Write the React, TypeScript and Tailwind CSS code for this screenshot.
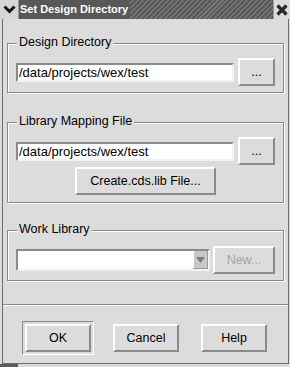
import type { ReactNode } from 'react'

// Motif-style "Set Design Directory" dialog

const raised =
  'border-2 border-t-white border-l-white border-r-[#8a8a8a] border-b-[#8a8a8a] bg-[#dcdcdc]'
const sunken =
  'border-2 border-t-[#8a8a8a] border-l-[#8a8a8a] border-r-[#f2f2f2] border-b-[#f2f2f2]'

function Frame({ label, children, className }: { label: string; children: ReactNode; className: string }) {
  return (
    <div
      className={`relative ml-[4px] w-[277px] border border-[#8a8a8a] shadow-[inset_1px_1px_0_#fff,1px_1px_0_#fff] ${className}`}
    >
      <span className="absolute left-[9px] -top-[10px] bg-[#dcdcdc] px-[2px] text-[12.5px] leading-[16px] text-black">
        {label}
      </span>
      {children}
    </div>
  )
}

function Btn({ children, w, disabled }: { children: ReactNode; w: string; disabled?: boolean }) {
  return (
    <div
      className={`${raised} ${w} h-[28px] shrink-0 flex items-center justify-center text-[12.5px] ${
        disabled ? 'text-[#a4a4a4]' : 'text-black'
      }`}
    >
      {children}
    </div>
  )
}

function PathInput({ value }: { value: string }) {
  return (
    <div className={`${sunken} w-[218px] h-[19px] bg-white flex items-center pl-[1px] text-[13px] leading-none text-black`}>
      {value}
    </div>
  )
}

export default function App() {
  return (
    <div className="w-[290px] h-[367px] bg-[#dcdcdc] overflow-hidden font-['Liberation_Sans',Arial,sans-serif] select-none">
      {/* Title bar */}
      <div className="flex h-[19px]">
        <div className="w-[19px] bg-[#d6d6d6] flex items-center justify-center border-r border-[#9a9a9a]">
          <svg width="13" height="9" viewBox="0 0 13 9">
            <polyline points="1.5,1.5 6.5,6.5 11.5,1.5" fill="none" stroke="#111" strokeWidth="3" />
          </svg>
        </div>
        <div className="flex-1 flex bg-[#585858] items-center">
          <span className="pl-[1px] pr-[2px] text-[11px] font-bold text-white whitespace-nowrap">Set Design Directory</span>
          <div className="flex-1 h-full bg-[repeating-linear-gradient(135deg,#585858_0px,#585858_2px,#767676_2px,#767676_3.5px)]" />
        </div>
        <div className="w-[17px] bg-[#dcdcdc] flex items-center justify-center border-l border-[#9a9a9a]">
          <svg width="12" height="12" viewBox="0 0 12 12">
            <path d="M1.5 1.5 L10.5 10.5 M10.5 1.5 L1.5 10.5" stroke="#2a2a2a" strokeWidth="3.2" />
          </svg>
        </div>
      </div>

      {/* Body */}
      <div className="ml-[2px] w-[287px] h-[345px] border-l border-r border-b border-[#6e6e6e] flex flex-col">
        <Frame label="Design Directory" className="mt-[24px] h-[50px]">
          <div className="flex items-center gap-[4px] pl-[8px] pt-[14px]">
            <PathInput value="/data/projects/wex/test" />
            <Btn w="w-[37px]">...</Btn>
          </div>
        </Frame>

        <Frame label="Library Mapping File" className="mt-[29px] h-[81px]">
          <div className="flex items-center gap-[4px] pl-[8px] pt-[14px]">
            <PathInput value="/data/projects/wex/test" />
            <Btn w="w-[37px]">...</Btn>
          </div>
          <div className="w-[259px] ml-[8px] mt-[2px] flex justify-center">
            <Btn w="w-[141px]">Create.cds.lib File...</Btn>
          </div>
        </Frame>

        <Frame label="Work Library" className="mt-[27px] h-[51px]">
          <div className="flex items-center gap-[3px] pl-[8px] pt-[15px]">
            <div className={`${sunken} w-[194px] h-[22px] bg-white flex justify-end`}>
              <div className="w-[16px] h-full bg-[#c9c9c9] border-l-2 border-l-white border-r border-r-[#9a9a9a] border-b border-b-[#9a9a9a] flex items-center justify-center">
                <svg width="9" height="6" viewBox="0 0 9 6">
                  <polygon points="0,0 9,0 4.5,6" fill="#7c7c7c" />
                </svg>
              </div>
            </div>
            <Btn w="w-[62px]" disabled>
              New...
            </Btn>
          </div>
        </Frame>

        {/* Separator */}
        <div className="mt-[23px] h-[2px] border-t border-t-[#8a8a8a] border-b border-b-white" />

        {/* Action buttons */}
        <div className="mt-[15px] flex items-center pl-[19px]">
          <div className="border border-t-[#8a8a8a] border-l-[#8a8a8a] border-r-white border-b-white p-[2px]">
            <Btn w="w-[66px]">OK</Btn>
          </div>
          <div className="ml-[19px]">
            <Btn w="w-[66px]">Cancel</Btn>
          </div>
          <div className="ml-[22px]">
            <Btn w="w-[66px]">Help</Btn>
          </div>
        </div>
      </div>

      {/* Desktop peeking under the window */}
      <div className="h-[3px] flex">
        <div className="w-[18px] bg-[#5a5a5a]" />
      </div>
    </div>
  )
}
